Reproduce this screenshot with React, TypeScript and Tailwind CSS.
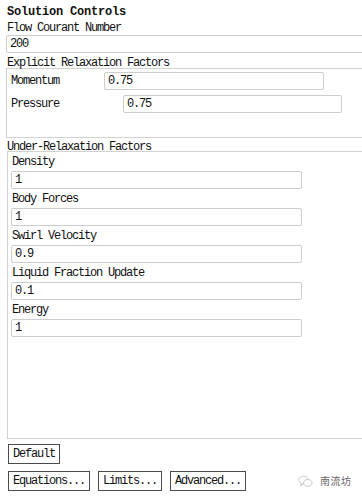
import React from "react";

const mono = "[font-family:'Liberation_Mono','DejaVu_Sans_Mono',monospace]";

function Field({ value, className = "" }: { value: string; className?: string }) {
  return (
    <div
      className={`h-[18px] border border-[#cdcdcd] rounded-[2px] bg-white pl-[3px] text-[12px] leading-[17px] tracking-[-1.2px] ${className}`}
    >
      {value}
    </div>
  );
}

function Btn({ label }: { label: string }) {
  return (
    <div className="h-[20px] border border-[#4a4a4a] px-[4px] text-[12px] leading-[19px] tracking-[-1.2px] bg-white whitespace-nowrap">
      {label}
    </div>
  );
}

const under = [
  { label: "Density", value: "1" },
  { label: "Body Forces", value: "1" },
  { label: "Swirl Velocity", value: "0.9" },
  { label: "Liquid Fraction Update", value: "0.1" },
  { label: "Energy", value: "1" },
];

export default function App() {
  return (
    <div className={`w-[362px] h-[498px] overflow-hidden bg-white text-[#111] ${mono}`}>
      {/* header */}
      <div className="pl-[7px] pt-[4px] h-[20px] text-[12px] leading-[16px] font-bold tracking-[-0.2px]">
        Solution Controls
      </div>
      <div className="pl-[7px] h-[15px] text-[12px] leading-[16px] tracking-[-1.2px]">
        Flow Courant Number
      </div>
      <Field value="200" className="ml-[6px] w-[360px] rounded-r-none" />

      {/* explicit relaxation */}
      <div className="pl-[7px] pt-[3px] h-[15px] text-[12px] leading-[14px] tracking-[-1.2px] whitespace-nowrap">
        Explicit Relaxation Factors
      </div>
      <div className="ml-[6px] w-[360px] h-[70px] border border-r-0 border-[#d2d2d2] pt-[3px] flex flex-col gap-[5px]">
        <div className="flex items-center">
          <span className="w-[97px] pl-[4px] text-[12px] tracking-[-1.2px]">Momentum</span>
          <Field value="0.75" className="w-[220px]" />
        </div>
        <div className="flex items-center">
          <span className="w-[116px] pl-[4px] text-[12px] tracking-[-1.2px]">Pressure</span>
          <Field value="0.75" className="w-[219px]" />
        </div>
      </div>

      {/* under relaxation */}
      <div className="pl-[7px] mt-[3px] h-[10px] text-[12px] leading-[12px] tracking-[-1.2px] whitespace-nowrap">
        Under-Relaxation Factors
      </div>
      <div className="ml-[7px] w-[360px] h-[288px] border border-r-0 border-[#d2d2d2] pl-[3px]">
        {under.map((u) => (
          <div key={u.label}>
            <div className="h-[19px] pt-[2px] pl-[1px] text-[12px] leading-[17px] tracking-[-1.2px]">{u.label}</div>
            <Field value={u.value} className="w-[291px]" />
          </div>
        ))}
      </div>

      {/* buttons */}
      <div className="pl-[8px] pt-[5px] flex">
        <Btn label="Default" />
      </div>
      <div className="pl-[8px] pt-[7px] flex items-center gap-[8px] h-[27px]">
        <Btn label="Equations..." />
        <Btn label="Limits..." />
        <Btn label="Advanced..." />
        <div className="ml-[44px] flex items-center gap-[7px] h-[20px] text-[#666] whitespace-nowrap">
          <svg width="15" height="13" viewBox="0 0 16 14" fill="none" stroke="#c4c4c4" strokeWidth="1">
            <ellipse cx="6" cy="5.5" rx="5.2" ry="4.3" />
            <ellipse cx="10.5" cy="8.5" rx="4.5" ry="3.6" fill="white" />
            <path d="M3 9.5 L2.5 11.5 L5 10" />
          </svg>
          <span className="text-[10px] leading-[14px] [font-family:'Noto_Sans_CJK_SC',sans-serif] tracking-[0.5px]">南流坊</span>
        </div>
      </div>
    </div>
  );
}
